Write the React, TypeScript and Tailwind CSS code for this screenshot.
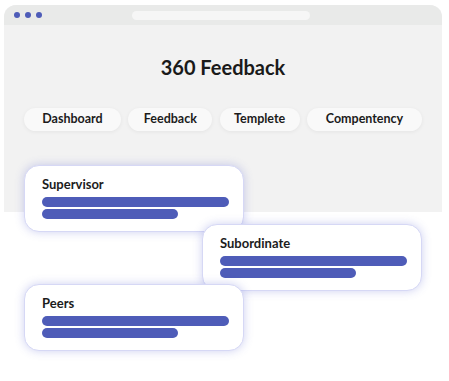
import React from "react";

const Bars = () => (
  <div className="mt-[5px] flex flex-col gap-[2px]">
    <div className="h-[10px] w-[187px] rounded-full bg-[#4e5cb8]" />
    <div className="h-[10px] w-[136px] rounded-full bg-[#4e5cb8]" />
  </div>
);

const Card = ({ title, className }: { title: string; className: string }) => (
  <div
    className={
      "relative h-[67px] w-[220px] rounded-[15px] border border-[#d6d8f5] bg-white pl-[17px] pt-[10px] shadow-[0_0_10px_rgba(90,100,210,0.3)] " +
      className
    }
  >
    <div className="text-[13px] font-bold leading-[16px] text-[#1c1c1c]">{title}</div>
    <Bars />
  </div>
);

const tabs: { label: string; w: string }[] = [
  { label: "Dashboard", w: "w-[97px]" },
  { label: "Feedback", w: "w-[84px]" },
  { label: "Templete", w: "w-[80px]" },
  { label: "Compentency", w: "w-[115px]" },
];

export default function App() {
  return (
    <div
      className="h-[381px] w-[449px] overflow-hidden bg-white"
      style={{ fontFamily: "Lato, 'Noto Sans', sans-serif" }}
    >
      <div className="ml-[4px] mt-[5px] h-[207px] w-[438px] overflow-hidden rounded-t-[12px] bg-[#f2f2f2]">
        <div className="flex h-[20px] items-center bg-[#e9eae9] pl-[9.5px]">
          <div className="flex gap-[5px]">
            <div className="h-[6px] w-[6px] rounded-full bg-[#4e5cb8]" />
            <div className="h-[6px] w-[6px] rounded-full bg-[#4e5cb8]" />
            <div className="h-[6px] w-[6px] rounded-full bg-[#4e5cb8]" />
          </div>
          <div className="ml-[90px] h-[9px] w-[178px] rounded-full bg-[#f6f6f6]" />
        </div>
        <div className="mt-[28px] text-center text-[20px] font-bold leading-[28px] text-[#1a1a1a]">
          360 Feedback
        </div>
        <div className="mt-[27px] flex justify-between px-[20px]">
          {tabs.map((t) => (
            <div
              key={t.label}
              className={
                "flex h-[23px] items-center justify-center rounded-full bg-[#f9f9f9] text-[12.5px] font-bold text-[#1c1c1c] shadow-[0_1px_4px_rgba(0,0,0,0.06)] " +
                t.w
              }
            >
              {t.label}
            </div>
          ))}
        </div>
      </div>
      <div className="relative -mt-[47px] flex flex-col">
        <Card title="Supervisor" className="ml-[24px]" />
        <Card title="Subordinate" className="-mt-[8px] ml-[202px]" />
        <Card title="Peers" className="-mt-[7px] ml-[24px]" />
      </div>
    </div>
  );
}
